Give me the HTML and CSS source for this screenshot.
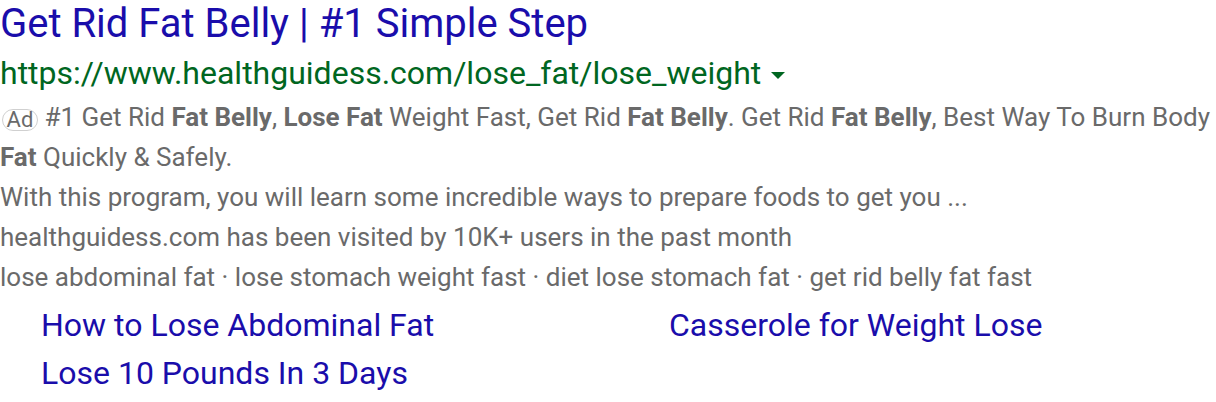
FILE: index.html
```html
<!DOCTYPE html>
<html lang="en">
<head>
<meta charset="utf-8">
<title>Get Rid Fat Belly</title>
<link rel="stylesheet" href="styles.css">
</head>
<body>
<div class="ad">
  <a class="title" href="#">Get Rid Fat Belly | #1 Simple Step</a>
  <div class="url">https://www.healthguidess.com/lose_fat/lose_weight <span class="caret"></span></div>
  <div class="desc">
    <p class="line"><span class="badge">Ad</span> #1 Get Rid <b>Fat Belly</b>, <b>Lose Fat</b> Weight Fast, Get Rid <b>Fat Belly</b>. Get Rid <b>Fat Belly</b>, Best Way To Burn Body <b>Fat</b> Quickly &amp; Safely.</p>
    <p class="line">With this program, you will learn some incredible ways to prepare foods to get you ...</p>
    <p class="line">healthguidess.com has been visited by 10K+ users in the past month</p>
    <p class="line">lose abdominal fat · lose stomach weight fast · diet lose stomach fat · get rid belly fat fast</p>
  </div>
  <div class="sitelinks">
    <a href="#">How to Lose Abdominal Fat</a>
    <a href="#">Casserole for Weight Lose</a>
    <a href="#">Lose 10 Pounds In 3 Days</a>
  </div>
</div>
</body>
</html>
```
FILE: styles.css
```css
html, body {
  margin: 0;
  padding: 0;
  background: #fff;
}
body {
  font-family: Roboto, "Liberation Sans", Arial, sans-serif;
  width: 1216px;
}
.ad {
  display: flex;
  flex-direction: column;
}
.title {
  font-size: 40px;
  line-height: 48px;
  color: #1a0dab;
  text-decoration: none;
  white-space: nowrap;
}
.url {
  margin-top: 5px;
  font-size: 32px;
  line-height: 40px;
  color: #006621;
  white-space: nowrap;
}
.caret {
  display: inline-block;
  width: 0;
  height: 0;
  margin-left: 2px;
  vertical-align: 5px;
  border-left: 7px solid transparent;
  border-right: 7px solid transparent;
  border-top: 7px solid #006621;
}
.desc {
  margin-top: 4px;
  font-size: 26px;
  line-height: 40px;
  color: #6a6a6a;
}
.line {
  margin: 0;
}
.line b {
  font-weight: 700;
}
.badge {
  display: inline-block;
  box-sizing: border-box;
  width: 36px;
  height: 22px;
  margin-left: 2px;
  border: 1px solid #d0d0d0;
  border-radius: 11px;
  font-size: 22px;
  line-height: 20px;
  text-align: center;
  color: #6a6a6a;
  vertical-align: -1px;
}
.sitelinks {
  margin-top: 4px;
  padding-left: 41px;
  display: grid;
  grid-template-columns: 628px auto;
  font-size: 32px;
  line-height: 48px;
}
.sitelinks a {
  color: #1a0dab;
  text-decoration: none;
  white-space: nowrap;
}
```
